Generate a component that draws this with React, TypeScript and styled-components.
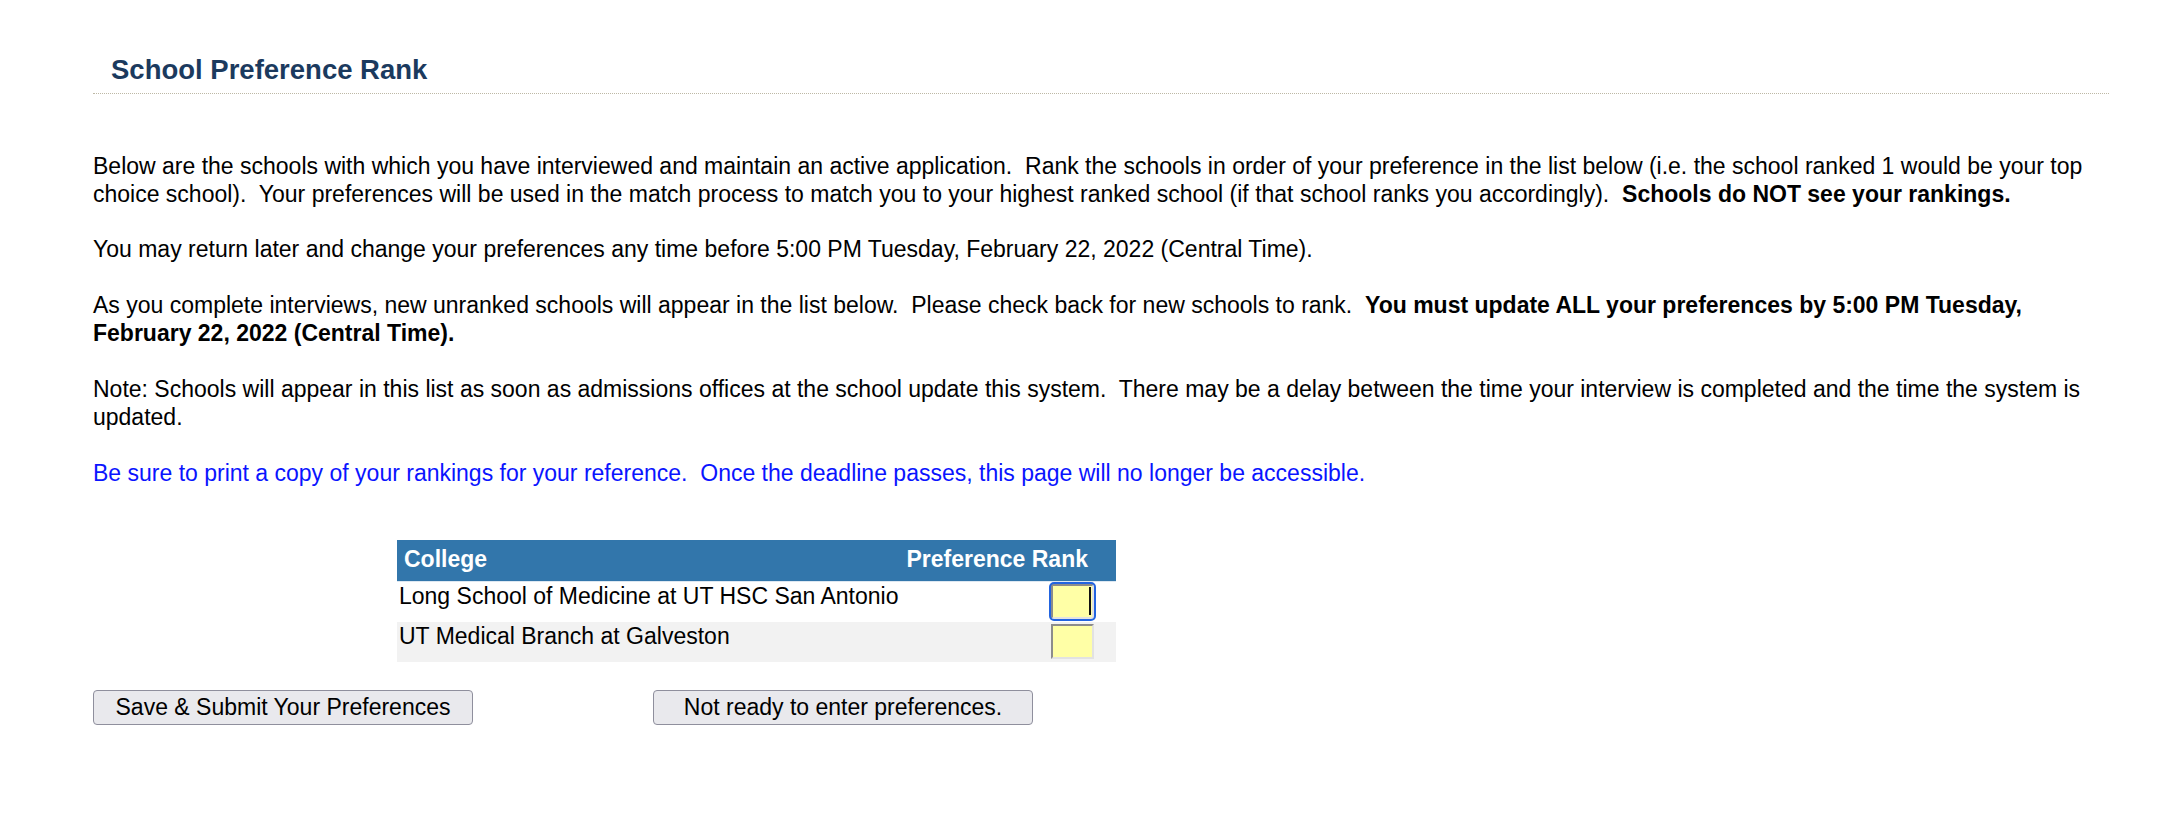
import { createGlobalStyle, styled } from "styled-components";

const GlobalStyle = createGlobalStyle`
  html, body {
    margin: 0;
    padding: 0;
    background: #fff;
  }
  body {
    font-family: "Liberation Sans", Arial, sans-serif;
    color: #000;
  }
`;

const Page = styled.div`
  padding: 54px 75px 40px 93px;
  font-size: 23px;
  line-height: 27.9px;
`;

const Heading = styled.h2`
  margin: 0;
  padding: 0 0 7px 18px;
  font-size: 27.5px;
  line-height: 31.6px;
  font-weight: 700;
  color: #1b3a5e;
  border-bottom: 1px dotted #bdb8a5;
`;

const Intro = styled.div`
  margin-top: 59px;
`;

const Para = styled.p<{ $blue?: boolean; $last?: boolean }>`
  margin: 0 0 ${(p) => (p.$last ? "0" : "27.9px")};
  color: ${(p) => (p.$blue ? "#0a14ff" : "#000")};
`;

const RankTable = styled.table`
  margin: 53px 0 0 304px;
  width: 719px;
  table-layout: fixed;
  border-collapse: collapse;
  border-spacing: 0;
`;

const HeadCell = styled.th<{ $right?: boolean }>`
  box-sizing: border-box;
  width: ${(p) => (p.$right ? "auto" : "505px")};
  background: #3276ab;
  color: #fff;
  font-weight: 700;
  white-space: nowrap;
  text-align: ${(p) => (p.$right ? "right" : "left")};
  padding: ${(p) => (p.$right ? "6px 28px 6.5px 0" : "6px 6px 6.5px 7px")};
  border-bottom: 1px solid #dde8f2;
`;

const Row = styled.tr<{ $alt?: boolean }>`
  background: ${(p) => (p.$alt ? "#f2f2f2" : "#fff")};
`;

const NameCell = styled.td`
  vertical-align: top;
  white-space: nowrap;
  padding: 1px 2px 0;
`;

const RankCell = styled.td`
  text-align: right;
  padding: 0 22px 0 0;
  line-height: 0;
`;

const InputWrap = styled.span<{ $focused?: boolean }>`
  position: relative;
  display: inline-block;
  margin: 2.5px 0;
  border-radius: 3px;
  outline: ${(p) => (p.$focused ? "2.5px solid #2264e0" : "none")};
  outline-offset: 0;
`;

const RankInput = styled.input`
  display: block;
  box-sizing: border-box;
  width: 43px;
  height: 35px;
  margin: 0;
  padding: 0 4px;
  background: #ffffa6;
  border: 2px solid;
  border-color: #8c8c8c #e2e2e2 #e2e2e2 #8c8c8c;
  font-family: "Liberation Sans", Arial, sans-serif;
  font-size: 23px;
  text-align: right;
  outline: none;
`;

const Caret = styled.span`
  position: absolute;
  right: 3.5px;
  top: 2.5px;
  width: 1.7px;
  height: 28.5px;
  background: #111;
`;

const ButtonRow = styled.div`
  display: flex;
  gap: 180px;
  margin-top: 28px;
`;

const Button = styled.button`
  box-sizing: border-box;
  width: 380px;
  height: 35px;
  padding: 0;
  background: #e9e9ed;
  border: 1px solid #8f8f9d;
  border-radius: 4px;
  font-family: "Liberation Sans", Arial, sans-serif;
  font-size: 23px;
  color: #000;
`;

const schools = [
  "Long School of Medicine at UT HSC San Antonio",
  "UT Medical Branch at Galveston",
];

const sp = "\u00a0 ";

export default function App() {
  return (
    <>
      <GlobalStyle />
      <Page>
        <Heading>School Preference Rank</Heading>
        <Intro>
          <Para>
            Below are the schools with which you have interviewed and maintain an active application.{sp}Rank the
            schools in order of your preference in the list below (i.e. the school ranked 1 would be your top choice
            school).{sp}Your preferences will be used in the match process to match you to your highest ranked school
            (if that school ranks you accordingly).{sp}<b>Schools do NOT see your rankings.</b>
          </Para>
          <Para>
            You may return later and change your preferences any time before 5:00 PM Tuesday, February 22, 2022
            (Central Time).
          </Para>
          <Para>
            As you complete interviews, new unranked schools will appear in the list below.{sp}Please check back for
            new schools to rank.{sp}
            <b>You must update ALL your preferences by 5:00 PM Tuesday, February 22, 2022 (Central Time).</b>
          </Para>
          <Para>
            Note: Schools will appear in this list as soon as admissions offices at the school update this
            system.{sp}There may be a delay between the time your interview is completed and the time the system is
            updated.
          </Para>
          <Para $blue $last>
            Be sure to print a copy of your rankings for your reference.{sp}Once the deadline passes, this page will no
            longer be accessible.
          </Para>
        </Intro>

        <RankTable>
          <thead>
            <tr>
              <HeadCell>College</HeadCell>
              <HeadCell $right>Preference Rank</HeadCell>
            </tr>
          </thead>
          <tbody>
            {schools.map((name, i) => (
              <Row key={name} $alt={i % 2 === 1}>
                <NameCell>{name}</NameCell>
                <RankCell>
                  <InputWrap $focused={i === 0}>
                    <RankInput type="text" maxLength={2} defaultValue="" aria-label={`Rank for ${name}`} />
                    {i === 0 && <Caret />}
                  </InputWrap>
                </RankCell>
              </Row>
            ))}
          </tbody>
        </RankTable>

        <ButtonRow>
          <Button type="button">Save &amp; Submit Your Preferences</Button>
          <Button type="button">Not ready to enter preferences.</Button>
        </ButtonRow>
      </Page>
    </>
  );
}
